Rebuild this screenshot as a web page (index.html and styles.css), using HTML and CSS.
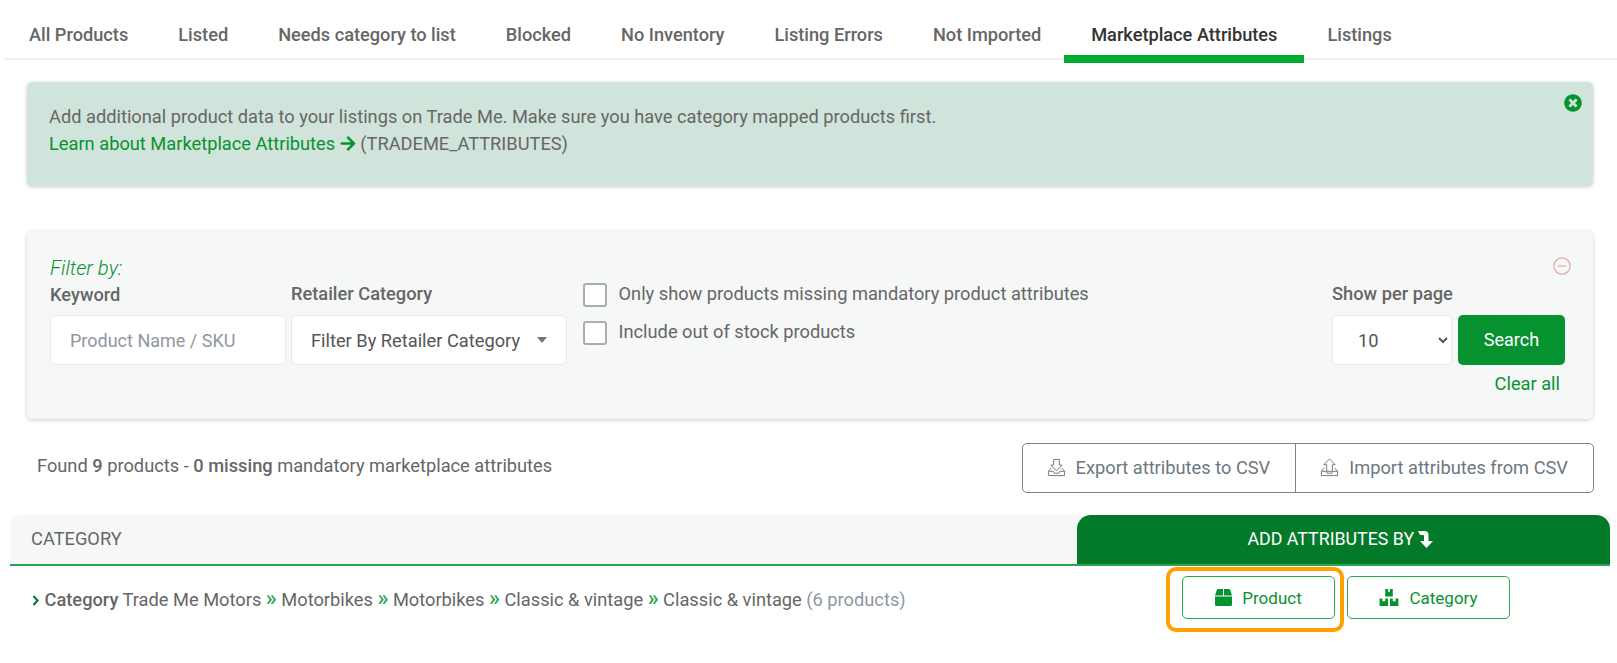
FILE: index.html
```html
<!DOCTYPE html>
<html lang="en">
<head>
  <meta charset="UTF-8" />
  <meta name="viewport" content="width=device-width, initial-scale=1.0" />
  <title>Marketplace Attributes</title>
  <link rel="stylesheet" href="styles.css">
</head>
<body>
  <nav class="tabs">
    <a class="tab">All Products</a>
    <a class="tab">Listed</a>
    <a class="tab">Needs category to list</a>
    <a class="tab">Blocked</a>
    <a class="tab">No Inventory</a>
    <a class="tab">Listing Errors</a>
    <a class="tab">Not Imported</a>
    <a class="tab active">Marketplace Attributes</a>
    <a class="tab">Listings</a>
  </nav>

  <div class="alert">
    <p>Add additional product data to your listings on Trade Me. Make sure you have category mapped products first.</p>
    <p>
      <a class="alert-link">Learn about Marketplace Attributes
        <svg class="alert-arrow" viewBox="0 0 448 512"><path d="M190.5 66.9l22.2-22.2c9.4-9.4 24.6-9.4 33.9 0L441 239c9.4 9.4 9.4 24.6 0 33.9L246.6 467.3c-9.4 9.4-24.6 9.4-33.9 0l-22.2-22.2c-9.5-9.5-9.3-25 .4-34.3L311.4 296H24c-13.3 0-24-10.7-24-24v-32c0-13.3 10.7-24 24-24h287.4L190.9 101.2c-9.8-9.3-10-24.8-.4-34.3z"/></svg></a>
      (TRADEME_ATTRIBUTES)
    </p>
    <svg class="alert-close" viewBox="0 0 512 512"><path d="M256 8C119 8 8 119 8 256s111 248 248 248 248-111 248-248S393 8 256 8zm121.6 313.1c4.7 4.7 4.7 12.3 0 17L338 377.6c-4.7 4.7-12.3 4.7-17 0L256 312l-65.1 65.6c-4.7 4.7-12.3 4.7-17 0L134.4 338c-4.7-4.7-4.7-12.3 0-17l65.6-65-65.6-65.1c-4.7-4.7-4.7-12.3 0-17l39.6-39.6c4.7-4.7 12.3-4.7 17 0l65 65.7 65.1-65.6c4.7-4.7 12.3-4.7 17 0l39.6 39.6c4.7 4.7 4.7 12.3 0 17L312 256l65.6 65.1z"/></svg>
  </div>

  <section class="filters">
    <svg class="filters-toggle" viewBox="0 0 20 20"><circle cx="10" cy="10" r="9"/><line x1="5.5" y1="10" x2="14.5" y2="10"/></svg>
    <div class="filters-title">Filter by:</div>
    <div class="filters-row">
      <div class="field keyword">
        <label>Keyword</label>
        <input type="text" placeholder="Product Name / SKU">
      </div>
      <div class="field category">
        <label>Retailer Category</label>
        <div class="select-wrap">
          <select><option>Filter By Retailer Category</option></select>
        </div>
      </div>
      <div class="checks">
        <label class="check"><span class="box"></span>Only show products missing mandatory product attributes</label>
        <label class="check"><span class="box"></span>Include out of stock products</label>
      </div>
      <div class="field per-page">
        <label>Show per page</label>
        <div class="per-page-row">
          <select class="page-select"><option>10</option></select>
          <button class="search-btn">Search</button>
        </div>
        <a class="clear-all">Clear all</a>
      </div>
    </div>
  </section>

  <div class="summary">
    <div class="found">Found <b>9</b> products - <b>0 missing</b> mandatory marketplace attributes</div>
    <div class="csv-group">
      <button class="csv-btn">
        <svg class="csv-icon" viewBox="0 0 20 20"><path d="M7 1.500h6v6h3l-6 6-6-6h3z"/><path d="M4.500 10.500 1.500 14v4.500h17V14l-3-3.500"/><path d="M1.500 14h5l1 2h5l1-2h5"/></svg>
        Export attributes to CSV
      </button>
      <button class="csv-btn">
        <svg class="csv-icon" viewBox="0 0 20 20"><path d="M7 14V7H4l6-6 6 6h-3v7z"/><path d="M4.500 10.500 1.500 14v4.500h17V14l-3-3.500"/><path d="M1.500 14h5l1 2h5l1-2h5"/></svg>
        Import attributes from CSV
      </button>
    </div>
  </div>

  <div class="table-head">
    <div class="head-title">CATEGORY</div>
    <div class="head-add">ADD ATTRIBUTES BY
      <svg class="head-arrow" viewBox="0 0 16 18"><path d="M0 1h6.500Q10.500 1 10.500 5v6h4.500l-6.500 7L2 11h4V6q0-1-1-1H2z"/></svg>
    </div>
  </div>

  <div class="table-row">
    <div class="crumbs">
      <svg class="crumb-chevron" viewBox="0 0 10 16"><path d="M2 1.500 8 8l-6 6.500" /></svg>
      <b>Category</b> Trade Me Motors <i>»</i> Motorbikes <i>»</i> Motorbikes <i>»</i> Classic &amp; vintage <i>»</i> Classic &amp; vintage <span class="count">(6 products)</span>
    </div>
    <div class="add-by">
      <div class="highlight">
        <button class="add-btn">
          <svg class="add-icon" viewBox="0 0 512 512"><path d="M509.5 184.6L458.9 32.8C452.4 13.2 434.1 0 413.4 0H272v192h238.7c-.4-2.5-.4-5-1.2-7.4zM240 0H98.6c-20.7 0-39 13.2-45.5 32.8L2.5 184.6c-.8 2.4-.8 4.9-1.2 7.4H240V0zM0 224v240c0 26.5 21.5 48 48 48h416c26.500 0 48-21.500 48-48V224H0z"/></svg>
          Product
        </button>
      </div>
      <button class="add-btn wide">
        <svg class="add-icon boxes" viewBox="0 0 20 18"><path fill-rule="evenodd" d="M6 0h3v3h2V0h3v8H6zM0 10h3v3h3v-3h3v8H0zM11 10h3v3h3v-3h3v8h-9z"/></svg>
        Category
      </button>
    </div>
  </div>
</body>
</html>
```

FILE: styles.css
```css
* {
  box-sizing: border-box;
}
body {
  font-family: Roboto, Arial, sans-serif;
  font-size: 18.250px;
  color: #666;
  background-color: #fff;
  margin: 0;
}
svg {
  flex: none;
}

/* tabs */
.tabs {
  display: flex;
  align-items: flex-start;
  height: 60px;
  margin-left: 4px;
  border-bottom: 2px solid #f0f0f0;
}
.tab {
  padding: 23px 25px 8px;
  line-height: 24px;
  font-size: 18.200px;
  font-weight: 500;
  color: #666;
}
.tab.active {
  margin: 0 -2px;
  padding: 23px 27px 8px;
  color: #333;
  border-bottom: 8px solid #03ac32;
}

/* alert */
.alert {
  position: relative;
  height: 104px;
  margin: 22px 24px 0 27px;
  padding: 21px 22px;
  background-color: #d1e4db;
  border-radius: 5px;
  box-shadow: 0 1px 4px rgba(0,0,0,0.2);
}
.alert p {
  margin: 0;
  line-height: 27px;
}
.alert-link {
  color: #06932f;
}
.alert-arrow {
  width: 16px;
  height: 17px;
  fill: #06932f;
  vertical-align: -2px;
}
.alert-close {
  position: absolute;
  top: 12px;
  right: 11px;
  width: 18px;
  height: 18px;
  fill: #06932f;
}

/* filters */
.filters {
  position: relative;
  height: 188px;
  margin: 45px 24px 0 27px;
  padding: 25px 28px 0 23px;
  background-color: #f6f8f7;
  border-radius: 5px;
  box-shadow: 0 1px 4px rgba(0,0,0,0.2);
}
.filters-toggle {
  position: absolute;
  top: 26px;
  right: 22px;
  width: 18px;
  height: 18px;
  fill: none;
  stroke: #e3a6a0;
  stroke-width: 1.300;
}
.filters-title {
  line-height: 24px;
  font-size: 20.250px;
  font-style: italic;
  font-weight: 300;
  color: #06932f;
}
.filters-row {
  display: flex;
  align-items: flex-start;
}
.field label {
  display: block;
  line-height: 30px;
  margin-bottom: 5px;
  font-weight: 500;
}
.category label, .per-page label {
  line-height: 28px;
  margin-bottom: 7px;
}
.field input, .field select {
  height: 50px;
  border: 1px solid #e8e8e8;
  border-radius: 5px;
  background-color: #fff;
  font-family: inherit;
  font-size: 18.250px;
}
.keyword {
  width: 236px;
}
.keyword input {
  width: 100%;
  padding: 0 19px;
  font-size: 18px;
}
.keyword input::placeholder {
  color: #8f96a3;
}
.category {
  width: 276px;
  margin-left: 5px;
}
.select-wrap {
  position: relative;
}
.select-wrap select {
  width: 100%;
  padding: 0 19px;
  color: #555;
  appearance: none;
}
.select-wrap::after {
  content: "";
  position: absolute;
  top: 22px;
  right: 20px;
  border-left: 5px solid transparent;
  border-right: 5px solid transparent;
  border-top: 6px solid #777;
}
.checks {
  margin: 3px 0 0 16px;
}
.check {
  display: flex;
  align-items: flex-start;
  height: 24px;
  margin-bottom: 14px;
  line-height: 22px;
}
.box {
  width: 24px;
  height: 24px;
  margin-right: 11.500px;
  border: 2px solid #a8adb3;
  border-radius: 3px;
  background-color: #fff;
}
.per-page {
  margin-left: auto;
  width: 233px;
}
.per-page-row {
  display: flex;
  gap: 6px;
}
.field .page-select {
  width: 120px;
  padding: 0 4px 0 21px;
  color: #555;
}
.search-btn {
  width: 107px;
  height: 50px;
  border: 0;
  border-radius: 5px;
  background-color: #06932f;
  color: #fff;
  font-family: inherit;
  font-size: 18px;
  font-weight: 400;
  padding-bottom: 2px;
}
.clear-all {
  display: block;
  margin: 7px 5px 0 0;
  line-height: 24px;
  text-align: right;
  color: #06932f;
}

/* summary row */
.summary {
  display: flex;
  justify-content: space-between;
  align-items: flex-start;
  margin: 24px 23px 0 37px;
}
.found {
  line-height: 46px;
}
.found b {
  font-weight: 500;
}
.csv-group {
  display: flex;
  height: 50px;
  border: 1px solid #7d858c;
  border-radius: 5px;
}
.csv-btn {
  display: flex;
  align-items: center;
  gap: 10px;
  padding: 0 25px 2px 24px;
  border: 0;
  background: none;
  color: #6d7780;
  font-family: inherit;
  font-size: 18.250px;
}
.csv-btn + .csv-btn {
  border-left: 1px solid #7d858c;
}
.csv-icon {
  width: 19px;
  height: 19px;
  fill: none;
  stroke: #6d7780;
  stroke-width: 1;
}

/* table */
.table-head {
  display: flex;
  height: 51px;
  margin: 22px 7px 0 10px;
  border-bottom: 2px solid #2aa650;
  background-color: #f6f8f7;
  border-radius: 10px 0 0 0;
}
.head-title {
  flex: 1;
  padding-left: 21px;
  line-height: 48px;
  color: #666;
}
.head-add {
  width: 533px;
  padding-right: 5px;
  line-height: 48px;
  text-align: center;
  color: #fff;
  font-size: 17.800px;
  font-weight: 400;
  background-color: #037a29;
  border-radius: 14px 14px 0 0;
}
.head-arrow {
  width: 16px;
  height: 18px;
  fill: #fff;
  vertical-align: -3px;
}
.table-row {
  display: flex;
  margin: 1px 7px 0 10px;
}
.crumbs {
  flex: 1;
  padding: 10px 0 0 21px;
  line-height: 45px;
}
.crumbs b {
  font-weight: 500;
}
.crumbs i {
  font-style: normal;
  font-weight: 500;
  font-size: 22.500px;
  line-height: 20px;
  color: #2aa650;
}
.crumb-chevron {
  width: 9px;
  height: 11px;
  fill: none;
  stroke: #037a29;
  stroke-width: 3;
}
.count {
  color: #8f96a3;
}
.add-by {
  display: flex;
  align-items: flex-start;
  gap: 3px;
  width: 533px;
  padding-left: 89px;
}
.highlight {
  padding: 5px 5px 9px 12px;
  border: 4px solid #ff9f00;
  border-radius: 10px;
}
.add-btn {
  display: flex;
  align-items: center;
  justify-content: center;
  gap: 10px;
  width: 153px;
  height: 43px;
  border: 1px solid #2aa650;
  border-radius: 5px;
  background-color: #fff;
  color: #06932f;
  font-family: inherit;
  font-size: 17px;
}
.add-btn.wide {
  width: 163px;
  margin-top: 9px;
}
.add-icon {
  width: 17px;
  height: 17px;
  fill: #06932f;
}
.add-icon.boxes {
  width: 20px;
}
```
